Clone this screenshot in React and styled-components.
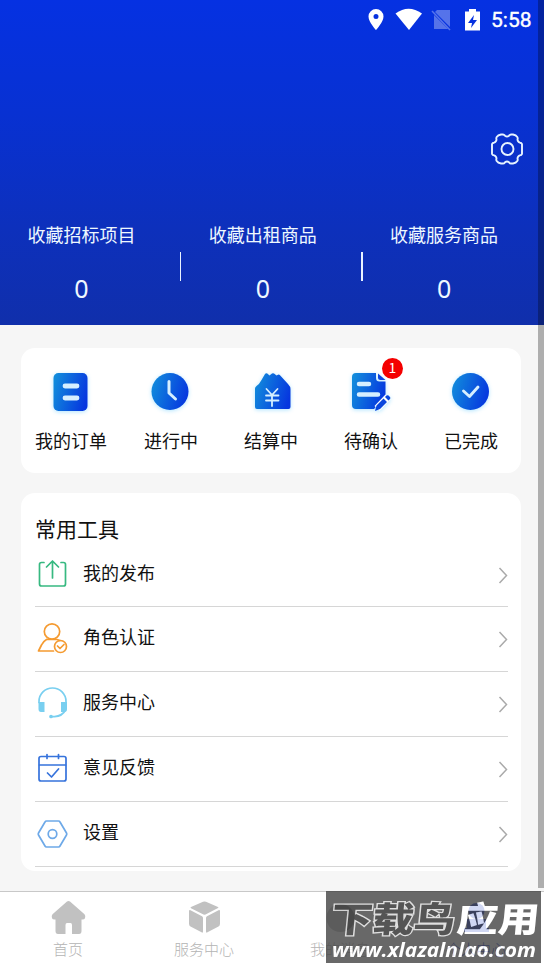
import React from 'react'
import styled, { createGlobalStyle } from 'styled-components'

const GlobalStyle = createGlobalStyle`
    * { box-sizing: border-box; }
    body {
        margin: 0;
        background-color: #f6f6f6;
        font-family: "Noto Sans CJK SC", "Noto Sans", sans-serif;
    }
    svg { display: block; }
`

const Container = styled.div`
    position: relative;
    display: flex;
    flex-direction: column;
    width: 544px;
    height: 967px;
    overflow: hidden;
    background-color: #f6f6f6;
`

const Header = styled.div`
    display: flex;
    flex-direction: column;
    height: 325px;
    color: #eef8ff;
    background: linear-gradient(#0531e2 0%, #0831d2 35%, #0d30bc 70%, #102fab 100%);
`

const StatusBar = styled.div`
    display: flex;
    justify-content: flex-end;
    align-items: center;
    height: 39px;
    padding-right: 12px;
    color: white;
`

const Time = styled.span`
    width: 41px;
    margin-left: 9px;
    font-family: Roboto, sans-serif;
    font-size: 21px;
    -webkit-text-stroke: 0.4px white;
    line-height: 24px;
    white-space: nowrap;
`

const SettingRow = styled.div`
    display: flex;
    justify-content: flex-end;
    padding: 94px 21px 0 0;
`

const Stats = styled.div`
    display: flex;
    margin-top: 56px;
`

const Stat = styled.div`
    display: flex;
    justify-content: space-between;
    width: 181.3px;
    height: 90px;
`

const StatBody = styled.div`
    display: flex;
    flex-direction: column;
    align-items: center;
    width: 163px;
`

const StatName = styled.span`
    font-size: 18px;
    line-height: 26px;
`

const StatValue = styled.span`
    margin-top: 24px;
    font-family: "Noto Sans", sans-serif;
    font-size: 25px;
    line-height: 34px;
`

const Divider = styled.div`
    width: 1.500px;
    height: 29px;
    margin-top: 31px;
    background-color: #e9f3ff;
`

const Main = styled.div`
    display: flex;
    flex-direction: column;
    gap: 20px;
    height: 566px;
    padding: 23px 23px 0 21px;
`

const Card = styled.div`
    width: 500px;
    border-radius: 14px;
    background-color: white;
`

const Orders = styled(Card)`
    display: flex;
    height: 125px;
`

const Order = styled.div`
    display: flex;
    flex-direction: column;
    align-items: center;
    width: 100px;
    padding-top: 20px;
    color: #111;
    font-size: 18px;
`

const OrderIcon = styled.div`
    position: relative;
    width: 48px;
    height: 48px;
    margin-bottom: 11px;
`

const Glow = styled.div`
    filter: drop-shadow(0 1px 2px rgba(60, 190, 255, 0.4));
`

const OrderName = styled.span`
    line-height: 26px;
`

const Badge = styled.span`
    position: absolute;
    top: -10px;
    right: -8px;
    width: 21px;
    height: 21px;
    border-radius: 50%;
    background-color: #f40000;
    color: white;
    font-size: 14px;
    line-height: 18px;
    text-align: center;
`

const Tools = styled(Card)`
    height: 378px;
    padding: 20px 13px 0 14px;
    color: #111;
`

const Title = styled.h3`
    margin: 0;
    font-size: 21px;
    font-weight: 400;
    line-height: 30px;
`

const Tool = styled.div`
    display: flex;
    align-items: center;
    height: 65px;
    border-bottom: 1px solid #d6d6d6;
    &:first-of-type { height: 64px; }
`

const ToolName = styled.span`
    flex: 1;
    margin: -6px 0 0 12px;
    font-size: 18px;
    line-height: 26px;
`

const TabBar = styled.div`
    display: flex;
    height: 76px;
    border-top: 1px solid #c8c8c8;
    background-color: white;
`

const Tab = styled.div`
    display: flex;
    flex-direction: column;
    align-items: center;
    width: 136px;
    padding-top: 8px;
    color: ${(props) => (props.$active ? '#1637c4' : '#b4b4b4')};
    font-size: 15px;
    font-weight: 300;
`

const TabName = styled.span`
    margin-top: 2px;
    line-height: 22px;
`

const ScrollBar = styled.div`
    position: absolute;
    top: 0;
    right: 0;
    width: 6px;
    height: 888px;
    background-color: rgba(0, 0, 0, 0.29);
`

const Watermark = styled.div`
    position: absolute;
    right: 3px;
    bottom: 4px;
    width: 215px;
    height: 72px;
    opacity: 0.8;
    background-color: #434343;
`

const Blue = () => (
    <defs>
        <linearGradient id="blue" x1="0" y1="0.3" x2="1" y2="0.6">
            <stop offset="0" stopColor="#118bdc" />
            <stop offset="1" stopColor="#0636df" />
        </linearGradient>
    </defs>
)

const line = { fill: 'none', strokeLinecap: 'round', strokeLinejoin: 'round' }

const orders = [
    {
        name: '我的订单',
        icon: <>
            <rect x="6.500" y="5" width="34" height="38" rx="5" fill="url(#blue)" />
            <path d="M18 18h12M18 30h12" stroke="#d6efff" strokeWidth="4.800" {...line} />
        </>,
    },
    {
        name: '进行中',
        icon: <>
            <circle cx="23" cy="23.500" r="18.500" fill="url(#blue)" />
            <path d="M22 13.500v11.500l6.500 6" stroke="#d6efff" strokeWidth="3" {...line} />
        </>,
    },
    {
        name: '结算中',
        icon: <>
            <path d="M8 39V20.500q0-1.500 1.500-2.500 3-2 5-6l3.500-6q1-1.500 2.300-.4l2.200 2 2.500-2q1-.8 2 0l2.500 2 1.500-.8q1-.6 2 .4l8 8.800q2.500 2.500 2.500 5V39q0 2-2 2H10q-2 0-2-2z" fill="url(#blue)" />
            <path d="M19.500 21l5.500 6 5.500-6M25 27v11M19 27.500h12.500M19 32.500h12.500" stroke="#d6efff" strokeWidth="1.800" {...line} />
        </>,
    },
    {
        name: '待确认',
        badge: 1,
        icon: <>
            <path d="M9 5h20v5q0 3.500 3.500 3.500h6V28L27 41H9q-4 0-4-4V9q0-4 4-4z" fill="url(#blue)" />
            <path d="M31 5.500l7.500 6.500h-5q-2.500 0-2.500-2.500z" fill="#0d45de" />
            <path d="M12 16h10M12 26.500h19" stroke="#d6efff" strokeWidth="4.500" {...line} />
            <path d="M41 29L30 40.500" stroke="white" strokeWidth="7" />
            <path d="M36.500 30.500l3.500 3.500-7 7-5 2 1.500-5.500zM38 29l1.500-1.500q1-.7 2 0l1.500 1.500q.7 1 0 2L41.500 32.500z" fill="#0a46dd" />
        </>,
    },
    {
        name: '已完成',
        icon: <>
            <circle cx="23.500" cy="23.500" r="18.500" fill="url(#blue)" />
            <path d="M16.500 23l6 5.500 8.500-9.500" stroke="#d6efff" strokeWidth="2.900" {...line} />
        </>,
    },
]

const tools = [
    {
        name: '我的发布',
        color: '#37b981',
        icon: <path d="M9.500 5.500H7q-2 0-2 2V27q0 2 2 2h22q2 0 2-2V7.500q0-2-2-2h-2.500M18 21V4M12 10l6-6 6 6" />,
    },
    {
        name: '角色认证',
        color: '#f59b31',
        icon: <>
            <circle cx="17.500" cy="10.500" r="7.700" />
            <path d="M12 18.500q-3.500 2-5 5.500L4 30h15M12.500 18.500h10l3 1" />
            <circle cx="26" cy="25.500" r="6" />
            <path d="M23 25l2.500 2.500 4-4" />
        </>,
    },
    {
        name: '服务中心',
        color: '#79cff0',
        icon: <>
            <path d="M4.500 16.500v-1a13.500 13.500 0 0 1 27 0v1" />
            <path d="M31 24q-3 6-11 6.700h-3" />
            <path d="M4 16h6v10H6.500q-2.500 0-2.500-3zM32.500 16h-6v10H30q2.500 0 2.500-3z" fill="#79cff0" stroke="none" />
            <circle cx="16.500" cy="30.500" r="1" fill="#79cff0" />
        </>,
    },
    {
        name: '意见反馈',
        color: '#3673dc',
        icon: <>
            <rect x="4.500" y="5.500" width="27" height="24.500" rx="2" />
            <path d="M5 14h26M12.500 3.500v4M24 3.500v4M13 22l4 4 7-8" />
        </>,
    },
    {
        name: '设置',
        color: '#6ea9e8',
        icon: <>
            <path d="M12 5h12q1 0 1.500 1l6.500 11q.6 1 0 2l-6.500 11q-.5 1-1.500 1H12q-1 0-1.500-1L4 19q-.6-1 0-2l6.500-11q.5-1 1.500-1z" />
            <circle cx="18" cy="18" r="4.300" />
        </>,
    },
]

const tabs = [
    {
        name: '首页',
        icon: <path d="M18 1.500q1.500-1.200 3 0l14.500 12.700q1.500 2 .5 4-.7 1.300-2.500 1.300h-1V31q0 3-2.500 3H23V25q0-2-1.500-2h-3.500q-1.500 0-1.500 2v9h-7.500q-2.500 0-2.500-3V19.500h-1q-1.800 0-2.500-1.300-1-2 .5-4z" />,
    },
    {
        name: '服务中心',
        icon: <>
            <path d="M18 1.800q1.500-.7 3 0l12 5.300q1 .5 0 1L20.500 14.500q-1 .3-2 0L6 8.300q-1-.6 0-1.200z" />
            <path d="M5.500 10.300q-1.500-.7-1.500 1v12.500q0 2 1.500 2.700L17 32.500q1 .5 1-1V18q0-1-1-1.800zM33.500 10.300q1.500-.7 1.500 1v12.500q0 2-1.500 2.700L22 32.500q-1 .5-1-1V18q0-1 1-1.800z" />
        </>,
    },
    { name: '我的消息', icon: <circle cx="19.500" cy="18" r="14" /> },
    {
        name: '个人中心',
        active: true,
        icon: <>
            <circle cx="19.500" cy="11" r="8" />
            <path d="M10 19h19v9h3v4H7v-4h3z" />
        </>,
    },
]

const StatusIcons = () => (
    <svg width="114" height="26" viewBox="0 0 114 26">
        <g fill="white">
            <path fillRule="evenodd" d="M8 2a7.500 7.500 0 0 0-7.500 7.500C.5 15 8 23 8 23s7.500-8 7.500-13.500A7.500 7.500 0 0 0 8 2zm0 5a2.500 2.500 0 1 1 0 5 2.500 2.500 0 0 1 0-5z" />
            <path d="M27.500 6.500q13-9.500 26.500 0L41 23z" />
            <path fillRule="evenodd" d="M101 2h7v2.500h4V23.500H97V4.500h4zm5 6l-6 8h4l-1 5 6-8h-4z" />
        </g>
        <path d="M69 3h13v17L67 5zM66 8l14 14H66z" fill="white" opacity="0.32" />
        <path d="M64 4l18 19" stroke="white" strokeWidth="1.500" opacity="0.32" />
    </svg>
)

const Gear = () => (
    <svg width="32" height="32" viewBox="0 0 32 32" stroke="#e6f3ff" strokeWidth="1.900" {...line}>
        <path d="M10 1.500h2q1 0 2 1.200 2 1.600 4 0 1-1.200 2-1.200h2q3 .7 4.300 2.500.7 1 .2 2.500.2 2.500 2.500 3.200 1.500 0 2 1.300v10q-.5 1.300-2 1.300-2.300.7-2.500 3.200.5 1.500-.2 2.500Q25 30 22 30.500h-2q-1 0-2-1.200-2-1.600-4 0-1 1.200-2 1.200h-2Q7 30 5.700 28q-.7-1-.2-2.500-.2-2.500-2.500-3.200-1.500 0-2-1.300V11q.5-1.300 2-1.300 2.300-.7 2.500-3.200Q5 5 5.700 4 7 2.200 10 1.500z" />
        <circle cx="16.500" cy="16" r="6" />
    </svg>
)

const App = () => {
    return (
        <>
            <GlobalStyle />
            <Container>
                <Header>
                    <StatusBar>
                        <StatusIcons />
                        <Time>5:58</Time>
                    </StatusBar>
                    <SettingRow>
                        <Gear />
                    </SettingRow>
                    <Stats>
                        {['收藏招标项目', '收藏出租商品', '收藏服务商品'].map((name, i) => (
                            <Stat key={name}>
                                <StatBody>
                                    <StatName>{name}</StatName>
                                    <StatValue>0</StatValue>
                                </StatBody>
                                {i < 2 && <Divider />}
                            </Stat>
                        ))}
                    </Stats>
                </Header>
                <Main>
                    <Orders>
                        {orders.map((item) => (
                            <Order key={item.name}>
                                <OrderIcon>
                                    <Glow>
                                        <svg width="48" height="48" viewBox="0 0 48 48">
                                            <Blue />
                                            {item.icon}
                                        </svg>
                                    </Glow>
                                    {item.badge && <Badge>{item.badge}</Badge>}
                                </OrderIcon>
                                <OrderName>{item.name}</OrderName>
                            </Order>
                        ))}
                    </Orders>
                    <Tools>
                        <Title>常用工具</Title>
                        {tools.map((item) => (
                            <Tool key={item.name}>
                                <svg width="36" height="36" viewBox="0.5 0 36 36" stroke={item.color} strokeWidth="1.700" {...line}>
                                    {item.icon}
                                </svg>
                                <ToolName>{item.name}</ToolName>
                                <svg width="10" height="18" viewBox="0 0 10 18" stroke="#aaa" strokeWidth="1.500" fill="none">
                                    <path d="M1.500 2L8.500 9.500l-7 7.500" />
                                </svg>
                            </Tool>
                        ))}
                    </Tools>
                </Main>
                <TabBar>
                    {tabs.map((item) => (
                        <Tab key={item.name} $active={item.active}>
                            <svg width="39" height="36" viewBox="0 0 39 36" fill={item.active ? '#1637c4' : '#c1c1c1'}>
                                {item.icon}
                            </svg>
                            <TabName>{item.name}</TabName>
                        </Tab>
                    ))}
                </TabBar>
                <ScrollBar />
                <Watermark>
                    <svg width="215" height="72" viewBox="0 0 215 72">
                        <g fontFamily="Noto Sans CJK SC, sans-serif" fontSize="35" fontWeight="900" transform="matrix(1.18 0 -0.1 1 0 0)">
                            <text x="7" y="41" fill="#2b2b2b" stroke="#d8d8d8" strokeWidth="2.500" paintOrder="stroke">下载鸟</text>
                            <text x="113.500" y="41" fill="white">应用</text>
                        </g>
                        <text x="6" y="66" textLength="204" lengthAdjust="spacingAndGlyphs" fill="white" fontFamily="Open Sans, sans-serif" fontSize="20" fontWeight="700" fontStyle="italic">www.xlazalnlao.com</text>
                    </svg>
                </Watermark>
            </Container>
        </>
    )
}

export default App
